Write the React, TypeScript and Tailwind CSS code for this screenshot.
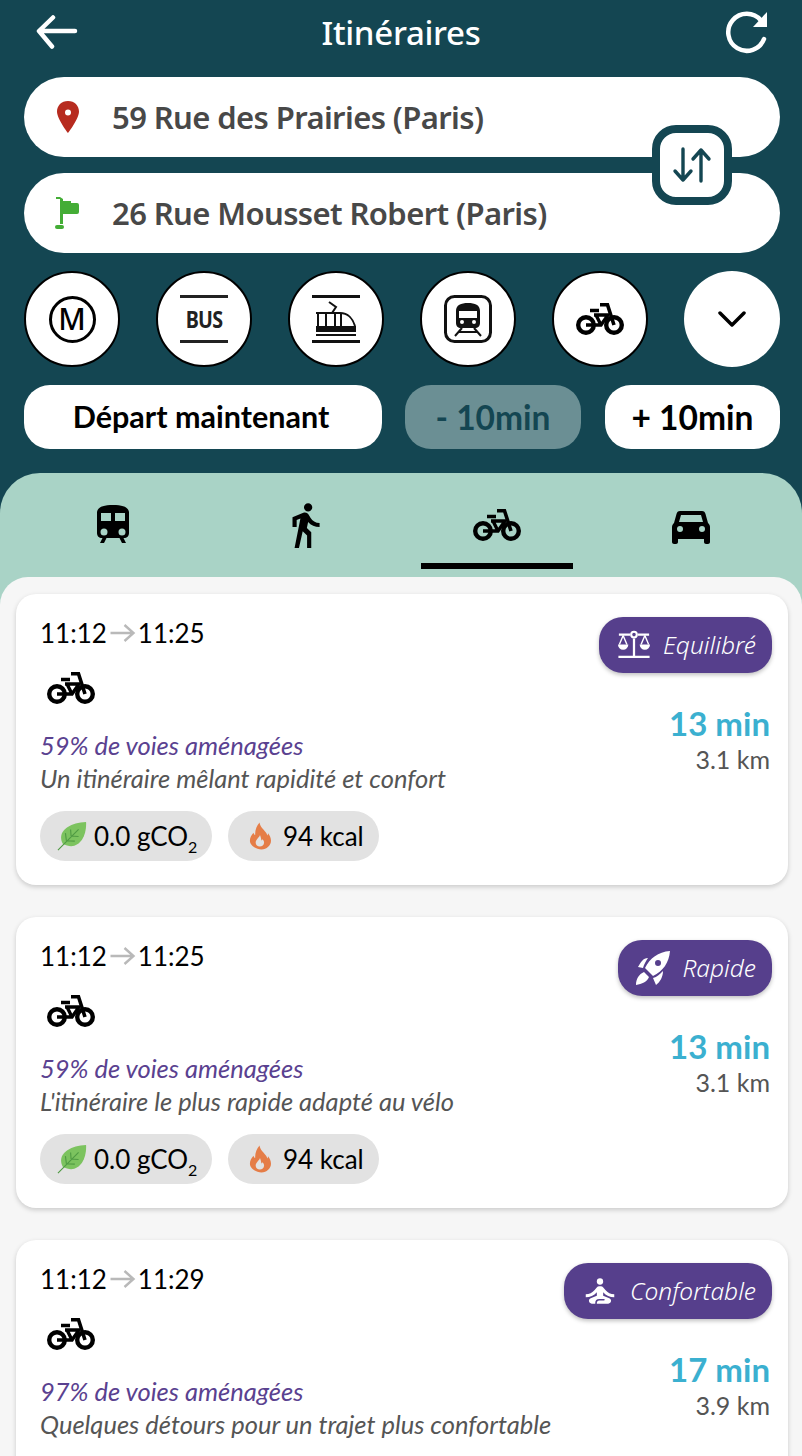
import { MdDirectionsWalk, MdSelfImprovement } from "react-icons/md";

const routes = [
  {
    arrive: "11:25",
    label: "Equilibré",
    icon: "scale",
    percent: "59% de voies aménagées",
    text: "Un itinéraire mêlant rapidité et confort",
    min: "13 min",
    km: "3.1 km",
    chips: true,
  },
  {
    arrive: "11:25",
    label: "Rapide",
    icon: "rocket",
    percent: "59% de voies aménagées",
    text: "L'itinéraire le plus rapide adapté au vélo",
    min: "13 min",
    km: "3.1 km",
    chips: true,
  },
  {
    // this card runs off the bottom of the screen, its chips are never seen
    arrive: "11:29",
    label: "Confortable",
    icon: "zen",
    percent: "97% de voies aménagées",
    text: "Quelques détours pour un trajet plus confortable",
    min: "17 min",
    km: "3.9 km",
    chips: false,
  },
];

function Bike({ className }: { className?: string }) {
  return (
    <svg viewBox="0 0 48 32" className={className} fill="none" stroke="currentColor">
      <circle cx="10" cy="22" r="7.800" strokeWidth="4.400" />
      <circle cx="38" cy="22" r="7.800" strokeWidth="4.400" />
      <path d="M10 22H25L32 12M20 12l5 10M18 12H33" strokeWidth="3.400" />
      <path d="M14 7.500h9M24 1.800h7.500L38 22" strokeWidth="3.600" />
    </svg>
  );
}

function ScaleIcon() {
  return (
    <svg viewBox="0 0 36 32" className="w-[34px] h-[32px] text-white" fill="none" stroke="currentColor">
      <path d="M2 5h12M22 5h12M18 9v19M1.500 28.500h33" strokeWidth="2.400" />
      <circle cx="18" cy="5" r="3" strokeWidth="2.200" />
      <path d="M6.500 6 2.500 15.500M6.500 6l4 9.500M29.500 6l-4 9.500M29.500 6l4 9.500" strokeWidth="1.500" />
      <path d="M1 15.500h11a5.500 5.500 0 0 1-11 0ZM24 15.500h11a5.500 5.500 0 0 1-11 0Z" fill="currentColor" stroke="none" />
    </svg>
  );
}

function RocketIcon() {
  return (
    <svg viewBox="0 0 34 34" className="w-[34px] h-[34px] text-white" fill="currentColor">
      <path
        fillRule="evenodd"
        d="M34 0C22 1 14 7 9 17l8 8c10-5 16-13 17-25ZM22 9a3 3 0 1 1 0 6 3 3 0 0 1 0-6Z"
      />
      <path d="M12 7C7 7 5 11 2 16l5 1c1-4 3-7 5-10ZM27 20c0 6-3 11-7 14l-3-7c4-1 7-4 10-7ZM8 21l5 5c-2 5-7 7-13 8 0-6 3-11 8-13Z" />
    </svg>
  );
}

function Leaf() {
  return (
    <svg viewBox="0 0 32 32" className="w-[32px] h-[30px]">
      <path d="M6 24C0 12 11 2 31 1c1 18-10 32-25 23Z" fill="#7cc35f" />
      <path
        d="M1 31 23 9M10 21l-1-8M15 16l-.5-7M10 21l9 .5M15 16l8 .5"
        stroke="#4f9a43"
        strokeWidth="1.200"
        fill="none"
      />
    </svg>
  );
}

function Flame() {
  return (
    <svg viewBox="0 0 24 28" className="w-[23px] h-[28px]">
      <path
        fillRule="evenodd"
        fill="#e57d47"
        d="M12 0c1 5 3.500 6.500 6.500 10 1.500 1.800 1.500 3 1.800 3.500.4-.8.6-1.700.6-2.500 1.900 2.300 3.100 5 3.100 8 0 5-4.500 9-10 9S2 24 2 19c0-4 1.800-6 3.700-8.500.4 1 .8 2 1.800 2.500C7.200 8 9 3.500 12 0Zm.5 13c-.5 2.500-4.500 4.500-4.500 8 0 2.500 2 4 4.300 4s4.500-1.700 4.500-4.300c0-1.700-1-2.700-1.800-3.400-.1.700-.4 1.200-1 1.500-.3-2.500-1-4.500-1.500-5.800Z"
      />
    </svg>
  );
}

function RouteCard({ route }: { route: (typeof routes)[number] }) {
  return (
    <div className="relative shrink-0 h-[291px] bg-white rounded-[20px] shadow-[0_2px_5px_rgba(0,0,0,0.18)] pl-[24px] pr-[16px] flex justify-between">
      <div className="pt-[23px] flex flex-col items-start">
        <div className="flex items-center h-[32px] text-[26px] text-black">
          <span>11:12</span>
          <svg viewBox="0 0 26 20" className="w-[27px] h-[20px] mx-[2px]" fill="none" stroke="#b9b9b9" strokeWidth="2.400">
            <path d="M1 10h23M15 2l9 8-9 8" />
          </svg>
          <span>{route.arrive}</span>
        </div>
        <Bike className="w-[48px] h-[32px] text-black mt-[23px] ml-[7px]" />
        <div className="mt-[25px] h-[33px] leading-[33px] text-[25.500px] italic text-[#5a4190]">{route.percent}</div>
        <div className="h-[33px] leading-[33px] text-[25.500px] italic text-[#555555]">{route.text}</div>
        {route.chips && (
          <div className="mt-[16px] flex gap-[16px] text-[26px] text-black">
            <div className="h-[50px] w-[172px] rounded-[25px] bg-[#e2e2e2] flex items-center pl-[16px]">
              <Leaf />
              <span className="ml-[6px]">
                0.0 gCO<sub className="text-[16px] align-[-3px] leading-none">2</sub>
              </span>
            </div>
            <div className="h-[50px] w-[151px] rounded-[25px] bg-[#e2e2e2] flex items-center pl-[20px]">
              <Flame />
              <span className="ml-[12px]">94 kcal</span>
            </div>
          </div>
        )}
      </div>
      <div className="pt-[23px] flex flex-col items-end">
        <div className="h-[56px] rounded-[24px] bg-[#563f8c] shadow-[0_2px_4px_rgba(0,0,0,0.25)] flex items-center gap-[12px] pl-[18px] pr-[16px] text-white text-[24.500px] italic font-light font-['Noto_Sans',sans-serif]">
          {route.icon === "scale" && <ScaleIcon />}
          {route.icon === "rocket" && <RocketIcon />}
          {route.icon === "zen" && <MdSelfImprovement className="w-[38px] h-[38px] mx-[-1px]" />}
          <span>{route.label}</span>
        </div>
        <div className="mt-[30px] mr-[2px] text-[33px] leading-[40px] font-bold text-[#3bb0d0]">{route.min}</div>
        <div className="mr-[2px] text-[25px] leading-[32px] text-[#555555]">{route.km}</div>
      </div>
    </div>
  );
}

function Address({ icon, text }: { icon: React.ReactNode; text: string }) {
  return (
    <div className="h-[80px] rounded-[40px] bg-white flex items-center">
      <div className="w-[88px] flex justify-center">{icon}</div>
      <span className="text-[31px] font-semibold text-[#484848] font-['Noto_Sans',sans-serif] tracking-[-0.6px]">{text}</span>
    </div>
  );
}

function Circle({ children }: { children: React.ReactNode }) {
  return (
    <div className="w-[96px] h-[96px] rounded-full bg-white border-2 border-black flex items-center justify-center text-black">
      {children}
    </div>
  );
}

export default function App() {
  return (
    <div className="w-[802px] h-[1456px] overflow-hidden bg-[#144652] font-['Lato',sans-serif] flex flex-col">
      <div className="h-[66px] shrink-0 pl-[36px] pr-[32px] flex items-center justify-between text-white">
        <svg viewBox="0 0 42 36" className="w-[42px] h-[36px]" fill="none" stroke="currentColor" strokeWidth="4.500" strokeLinecap="round" strokeLinejoin="round">
          <path d="M39 16H4M17 2.500 3 16l13 15.500" />
        </svg>
        <span className="text-[33px] font-medium font-['Noto_Sans',sans-serif] tracking-[-0.3px]">Itinéraires</span>
        <svg viewBox="0 0 46 44" className="w-[46px] h-[44px]" fill="none" stroke="currentColor" strokeWidth="4.500" strokeLinecap="round">
          <path d="M37 9.500A18.500 18.500 0 1 0 40 28" />
          <path d="M43 1v15H29Z" fill="currentColor" stroke="none" />
        </svg>
      </div>

      <div className="relative mt-[11px] ml-[24px] mr-[22px] flex flex-col gap-[16px]">
        <Address
          text="59 Rue des Prairies (Paris)"
          icon={
            <svg viewBox="0 0 24 32" className="w-[28px] h-[32px] mr-[1px]">
              <path
                fillRule="evenodd"
                fill="#b72b1f"
                d="M12 0C5.400 0 1 4.700 1 10.500 1 18 12 32 12 32s11-14 11-21.500C23 4.700 18.600 0 12 0Zm0 8.500a3 3 0 1 1 0 6 3 3 0 0 1 0-6Z"
              />
            </svg>
          }
        />
        <Address
          text="26 Rue Mousset Robert (Paris)"
          icon={
            <svg viewBox="0 0 26 32" className="w-[26px] h-[32px] mr-[1px]" fill="#44ad36">
              <path d="M1 0h4l3 2v2h8v2h6a2 2 0 0 1 2 2v7a2 2 0 0 1-2 2H8v10H5V2H1Z" />
              <rect x="0" y="28" width="9" height="4" rx="2" />
            </svg>
          }
        />
        <div className="absolute right-[48px] top-[48px] w-[80px] h-[80px] rounded-[24px] border-[8px] border-[#144652] bg-white flex items-center justify-center">
          <svg viewBox="0 0 40 36" className="w-[40px] h-[38px]" fill="none" stroke="#144652" strokeWidth="3.400" strokeLinecap="round" strokeLinejoin="round">
            <path d="M11 2v31M3 24l8 9 8-9M29 34V3M21 12l8-9 8 9" />
          </svg>
        </div>
      </div>

      <div className="mt-[18px] ml-[24px] mr-[22px] flex justify-between">
        <Circle>
          <div className="w-[47px] h-[47px] rounded-full border-[3px] border-black flex items-center justify-center text-[30px] leading-none font-medium font-['Noto_Sans',sans-serif]">
            M
          </div>
        </Circle>
        <Circle>
          <div className="w-[48px] h-[48px] flex flex-col justify-between">
            <div className="h-[3px] bg-[#222222]" />
            <span className="text-center text-[24px] leading-none font-bold text-[#222222] font-['Noto_Sans',sans-serif] tracking-[-1px] scale-x-[0.82]">BUS</span>
            <div className="h-[3px] bg-[#222222]" />
          </div>
        </Circle>
        <Circle>
          <svg viewBox="0 0 48 48" className="w-[48px] h-[48px]" fill="none" stroke="#111111">
            <path d="M0 1.500h48M0 46.500h48" strokeWidth="3" />
            <path d="M4 18H28c8 0 13 6 15 13" strokeWidth="2" />
            <path d="M17 7l7 5-4 6M6 18v13M14 18v13M23 18v13M29 18v13" strokeWidth="2" />
            <path d="M4 31h40v6H4Z" fill="#111111" stroke="none" />
            <path d="M4 40h40" strokeWidth="2" />
          </svg>
        </Circle>
        <Circle>
          <svg viewBox="0 0 48 48" className="w-[48px] h-[48px]">
            <rect x="1.500" y="1.500" width="45" height="45" rx="9" fill="none" stroke="#111111" strokeWidth="3" />
            <path
              fillRule="evenodd"
              fill="#111111"
              d="M24 8c-7 0-12 2-12 8v12c0 3 2 5 5 5h14c3 0 5-2 5-5V16c0-6-5-8-12-8Zm-9 8h18v7H15Zm3 9a2 2 0 1 1 0 4 2 2 0 0 1 0-4Zm12 0a2 2 0 1 1 0 4 2 2 0 0 1 0-4Z"
            />
            <path d="M18 33l-7 8M30 33l7 8M15 37h18" stroke="#111111" strokeWidth="2" fill="none" />
          </svg>
        </Circle>
        <Circle>
          <Bike className="w-[48px] h-[32px]" />
        </Circle>
        <div className="w-[96px] h-[96px] rounded-full bg-white flex items-center justify-center text-black">
          <svg viewBox="0 0 28 16" className="w-[28px] h-[16px]" fill="none" stroke="currentColor" strokeWidth="3.500" strokeLinecap="round" strokeLinejoin="round">
            <path d="M2 2l12 12L26 2" />
          </svg>
        </div>
      </div>

      <div className="mt-[18px] ml-[24px] flex font-bold text-black">
        <div className="w-[358px] h-[64px] rounded-[26px] bg-white flex items-center justify-center pr-[4px] text-[30.500px]">Départ maintenant</div>
        <div className="ml-[23px] w-[176px] h-[64px] rounded-[26px] bg-[#6b8f94] text-[#144652] flex items-center justify-center text-[33.500px]">- 10min</div>
        <div className="ml-[24px] w-[175px] h-[64px] rounded-[26px] bg-white flex items-center justify-center text-[33.500px]">+ 10min</div>
      </div>

      <div className="mt-[24px] flex-1 min-h-0 rounded-t-[40px] bg-[#a9d3c6] flex flex-col">
        <div className="h-[104px] shrink-0 flex pl-[17px] text-black">
          <div className="w-[192px] flex justify-center pt-[32px]">
            <svg viewBox="0 0 32 38" className="w-[32px] h-[38px]" fill="currentColor">
              <path
                fillRule="evenodd"
                d="M16 0C6 0 1 2 0 7v21c0 3 2 5 5 5h22c3 0 5-2 5-5V7c-1-5-6-7-16-7ZM4 8h10v8H4Zm14 0h10v8H18ZM7 23.500a3.500 3.500 0 1 1 0 7 3.500 3.500 0 0 1 0-7Zm18 0a3.500 3.500 0 1 1 0 7 3.500 3.500 0 0 1 0-7Z"
              />
              <path d="M6 32l-3 6h4l3-6ZM26 32l3 6h-4l-3-6Z" />
            </svg>
          </div>
          <div className="w-[192px] flex justify-center pt-[27px]">
            <MdDirectionsWalk className="w-[50px] h-[50px]" />
          </div>
          <div className="w-[192px] flex flex-col items-center pt-[36px] relative">
            <Bike className="w-[48px] h-[32px]" />
            <div className="absolute bottom-[8px] w-[152px] h-[6px] bg-black" />
          </div>
          <div className="w-[192px] flex justify-center pt-[37px]">
            <svg viewBox="0 0 38 34" className="w-[38px] h-[34px] ml-[4px]" fill="currentColor">
              <path
                fillRule="evenodd"
                d="M8 1h22c2 0 3 1 3.500 3L36 13c1 1 2 2 2 4v15c0 1-1 2-2 2h-2c-1 0-2-1-2-2v-3H6v3c0 1-1 2-2 2H2c-1 0-2-1-2-2V17c0-2 1-3 2-4L4.500 4C5 2 6 1 8 1Zm1 4-2 7h24l-2-7ZM8 16a3 3 0 1 0 0 6 3 3 0 0 0 0-6Zm22 0a3 3 0 1 0 0 6 3 3 0 0 0 0-6Z"
              />
            </svg>
          </div>
        </div>
        <div className="flex-1 min-h-0 rounded-t-[28px] bg-[#f6f6f6] pl-[16px] pr-[14px] pt-[17px] flex flex-col gap-[32px] overflow-hidden">
          {routes.map((route) => (
            <RouteCard key={route.label} route={route} />
          ))}
        </div>
      </div>
    </div>
  );
}
